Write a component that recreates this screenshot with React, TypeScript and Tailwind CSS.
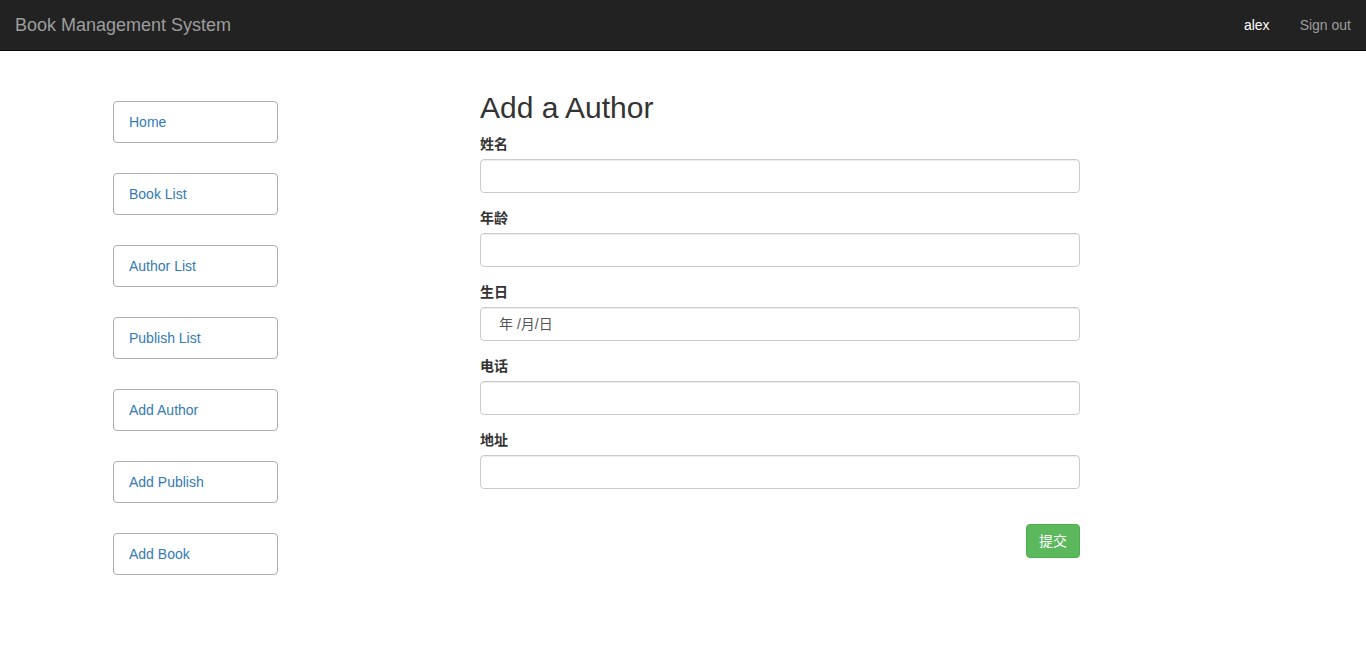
const font = "font-['Helvetica_Neue','Liberation_Sans','Noto_Sans_CJK_SC',Arial,sans-serif]";

const navLinks = ["Home", "Book List", "Author List", "Publish List", "Add Author", "Add Publish", "Add Book"];

const fields = [
  { label: "姓名", kind: "text" },
  { label: "年龄", kind: "text" },
  { label: "生日", kind: "date" },
  { label: "电话", kind: "text" },
  { label: "地址", kind: "text" },
];

export default function App() {
  return (
    <div className={`${font} min-h-[662px] bg-white text-[14px] text-[#333]`}>
      <nav className="h-[51px] bg-[#222] border-b border-[#080808] flex items-center justify-between">
        <a className="px-[15px] text-[18px] text-[#9d9d9d] leading-[20px]">Book Management System</a>
        <div className="flex">
          <a className="px-[15px] text-white leading-[20px]">alex</a>
          <a className="px-[15px] text-[#9d9d9d] leading-[20px]">Sign out</a>
        </div>
      </nav>

      <div className="max-w-[1170px] mx-auto px-[15px] flex">
        <div className="w-[367px] shrink-0 pt-[50px] flex flex-col gap-[30px]">
          {navLinks.map((link) => (
            <a
              key={link}
              className="w-[165px] h-[42px] border border-[#adadad] rounded-[4px] flex items-center pl-[15px] text-[#337ab7]"
            >
              {link}
            </a>
          ))}
        </div>

        <div className="w-[600px] pt-[40px]">
          <h2 className="text-[30px] leading-[33px] font-medium text-[#333] mb-[10px] font-normal">Add a Author</h2>
          {fields.map((f) => (
            <div key={f.label} className="mb-[15px]">
              <label className="block font-bold leading-[20px] mb-[5px] text-[#333]">{f.label}</label>
              {f.kind === "date" ? (
                <div className="h-[34px] border border-[#ccc] rounded-[4px] flex items-center pl-[18px] text-[#555] shadow-[inset_0_1px_1px_rgba(0,0,0,0.075)]">
                  年 /月/日
                </div>
              ) : (
                <input
                  type="text"
                  className="block w-full h-[34px] border border-[#ccc] rounded-[4px] px-[12px] shadow-[inset_0_1px_1px_rgba(0,0,0,0.075)] outline-none"
                />
              )}
            </div>
          ))}
          <div className="flex justify-end pt-[20px]">
            <button className="h-[34px] px-[12px] bg-[#5cb85c] border border-[#4cae4c] rounded-[4px] text-white leading-[20px]">
              提交
            </button>
          </div>
        </div>
      </div>
    </div>
  );
}
